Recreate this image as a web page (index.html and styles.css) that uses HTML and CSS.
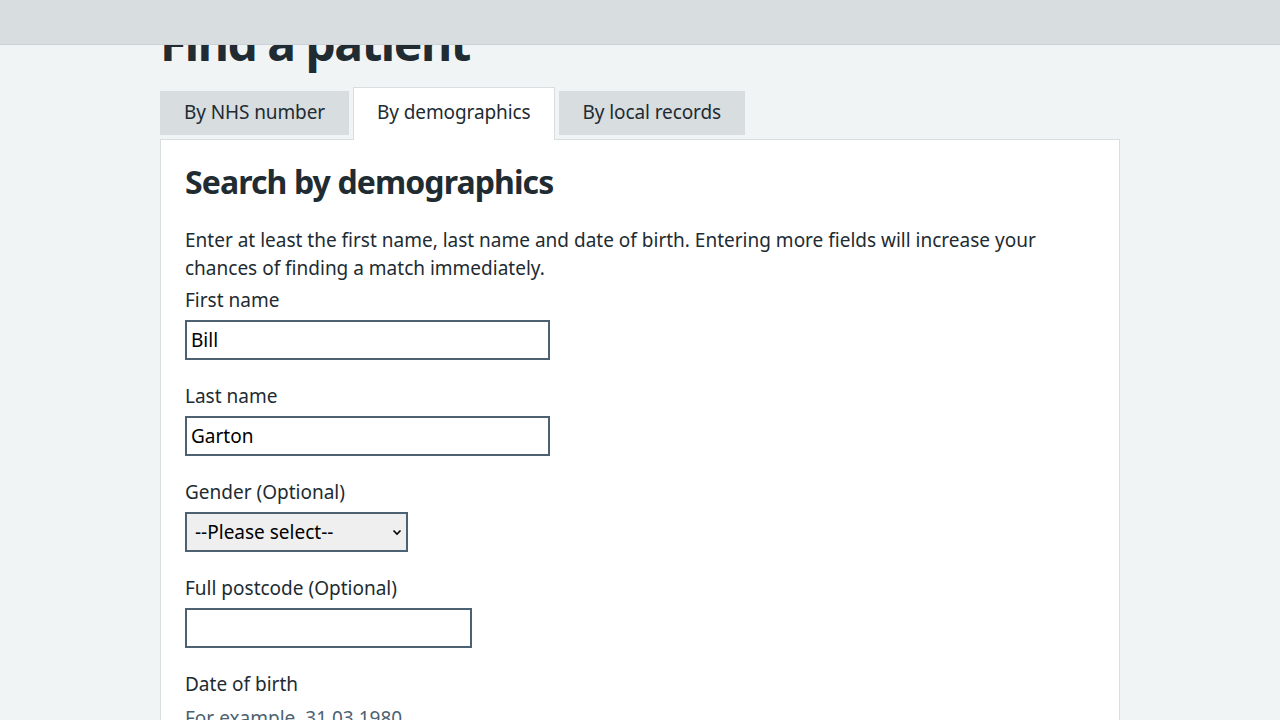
FILE: index.html
```html
<!DOCTYPE html>
<html lang="en">
<head>
<meta charset="utf-8">
<title>Find a patient</title>
<link rel="stylesheet" href="styles.css">
</head>
<body>
<header class="topbar"></header>
<main class="container">
  <h1 class="page-title">Find a patient</h1>
  <ul class="tabs">
    <li class="tab">By NHS number</li>
    <li class="tab tab-active">By demographics</li>
    <li class="tab">By local records</li>
  </ul>
  <section class="panel">
    <h2 class="panel-title">Search by demographics</h2>
    <p class="intro">Enter at least the first name, last name and date of birth. Entering more fields will increase your chances of finding a match immediately.</p>
    <div class="field">
      <label class="label" for="fn">First name</label>
      <input class="input input-name" id="fn" type="text" value="Bill">
    </div>
    <div class="field">
      <label class="label" for="ln">Last name</label>
      <input class="input input-name" id="ln" type="text" value="Garton">
    </div>
    <div class="field">
      <label class="label" for="gender">Gender (Optional)</label>
      <div class="select-wrap">
        <select class="select" id="gender">
          <option>--Please select--</option>
          <option>Male</option>
          <option>Female</option>
        </select>
        <svg class="chev" width="10" height="7" viewBox="0 0 10 7"><path d="M1.5 1.5 L5 5 L8.5 1.5" fill="none" stroke="#000" stroke-width="1.6"/></svg>
      </div>
    </div>
    <div class="field">
      <label class="label" for="pc">Full postcode (Optional)</label>
      <input class="input input-postcode" id="pc" type="text" value="">
    </div>
    <div class="field">
      <label class="label">Date of birth</label>
      <div class="hint">For example, 31 03 1980</div>
    </div>
  </section>
</main>
</body>
</html>
```
FILE: styles.css
```css
* { box-sizing: border-box; }
html, body { margin: 0; padding: 0; }
body {
  background: #f0f4f5;
  color: #212b32;
  font-family: "Noto Sans", "Liberation Sans", sans-serif;
  font-size: 19px;
  line-height: 28px;
  overflow: hidden;
  height: 720px;
}
.topbar {
  position: fixed;
  top: 0; left: 0; right: 0;
  height: 45px;
  background: #d8dde0;
  border-bottom: 1px solid #cbd1d4;
  z-index: 10;
}
.container {
  width: 960px;
  margin: 0 auto;
}
.page-title {
  margin: 15px 0 20px;
  font-size: 48px;
  line-height: 56px;
  font-weight: 700;
  letter-spacing: -1.5px;
}
.tabs {
  list-style: none;
  margin: 0;
  padding: 0;
  display: flex;
  align-items: flex-start;
  gap: 4px;
}
.tab {
  background: #d8dde0;
  padding: 7px 24px 9px;
  line-height: 28px;
  color: #212b32;
  letter-spacing: -0.1px;
}
.tab-active {
  background: #fff;
  border: 1px solid #d8dde0;
  border-bottom: 0;
  margin-top: -4px;
  padding: 10px 23px 14px;
  position: relative;
  z-index: 1;
}
.panel {
  background: #fff;
  border: 1px solid #d8dde0;
  margin-top: -1px;
  padding: 24px 24px 40px;
  min-height: 700px;
}
.panel-title {
  margin: 0 0 26px;
  font-size: 32px;
  line-height: 36px;
  font-weight: 700;
  letter-spacing: -0.9px;
}
.intro {
  margin: 0 0 4px;
}
.field {
  margin-bottom: 22px;
}
.label {
  display: block;
  margin-bottom: 6px;
}
.input, .select {
  display: block;
  height: 40px;
  border: 2px solid #4c6272;
  font-family: inherit;
  font-size: 19px;
  color: #000;
  padding: 0 4px;
  border-radius: 0;
  outline: none;
}
.input { background: #fff; }
.input-name { width: 365px; }
.input-postcode { width: 287px; }
.select-wrap {
  position: relative;
  width: 223px;
}
.select {
  width: 223px;
  background: #efefef;
  appearance: none;
  -webkit-appearance: none;
  padding: 0 8px;
}
.chev {
  position: absolute;
  right: 6px;
  top: 17px;
  pointer-events: none;
}
.hint {
  color: #4c6272;
  margin-top: 4px;
}
```
